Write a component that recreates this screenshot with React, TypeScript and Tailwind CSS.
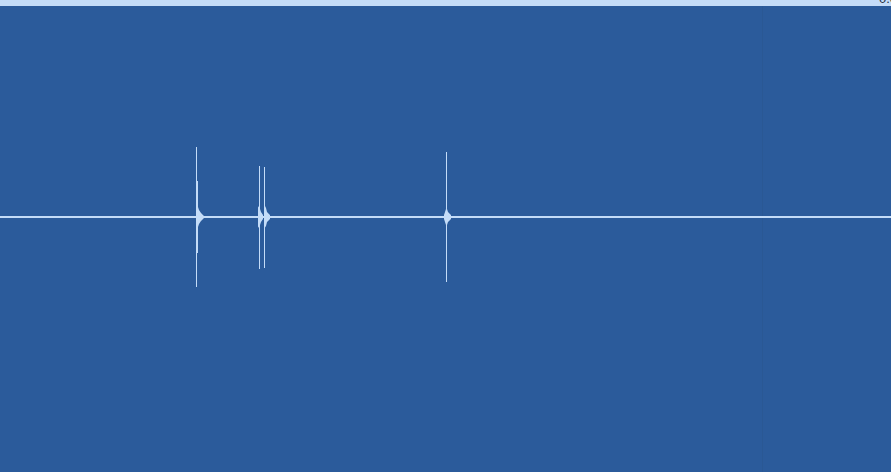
import React from "react";

export default function App() {
  const light = "#c4dcf8";
  return (
    <div className="w-[891px] h-[472px] flex flex-col bg-[#2b5b9b] overflow-hidden" style={{ fontFamily: '"Liberation Sans", Arial, sans-serif' }}>
      <div className="h-[6px] bg-[#c4dcf8] flex justify-end overflow-hidden shrink-0">
        <span className="text-[13px] leading-[13px] -mt-[8px] -mr-[6px] text-[#1f2f40]">0.0</span>
      </div>
      <div className="flex-1 relative">
        <svg width="891" height="466" viewBox="0 6 891 466" className="block">
          <rect x="762" y="6" width="1" height="466" fill="#2a5894" />
          <rect x="0" y="216" width="891" height="2" fill={light} />
          {/* spike 1 */}
          <rect x="196" y="147" width="1" height="140" fill={light} />
          <rect x="197" y="181" width="1" height="72" fill={light} />
          <polygon points="197,204 198,207 199,210 201,213 204,216 204,218 201,221 199,224 198,227 197,230" fill={light} />
          {/* spike 2 and 3 */}
          <rect x="259" y="166" width="1" height="103" fill={light} />
          <polygon points="258,206 260,209 261,212 263,215 263,219 261,222 260,225 258,228" fill={light} />
          <rect x="264" y="167" width="1" height="101" fill={light} />
          <polygon points="264,204 266,208 267,212 270,215 270,219 267,222 266,226 264,229" fill={light} />
          {/* spike 4 */}
          <rect x="446" y="152" width="1" height="130" fill={light} />
          <polygon points="446,206 447,209 448,212 451,215 451,219 448,222 447,225 446,228" fill={light} />
          <polygon points="446,209 445,212 444,215 444,219 445,222 446,225" fill={light} />
        </svg>
      </div>
    </div>
  );
}
